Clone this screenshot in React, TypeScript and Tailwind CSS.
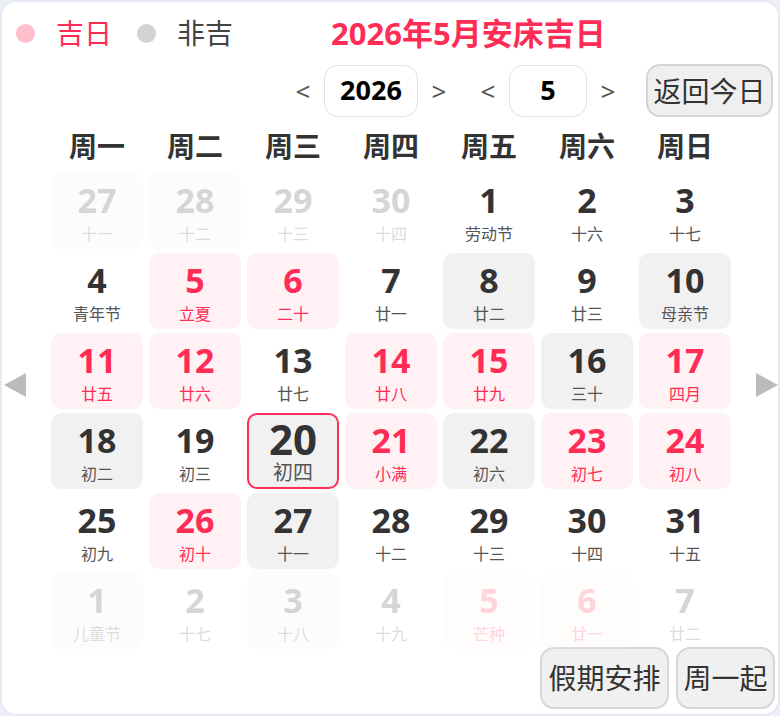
import React from "react";

type Cell = { d: number; l: string; t: "n" | "p" | "g" | "today"; o?: boolean };

const cells: Cell[] = [
  { d: 27, l: "十一", t: "g", o: true },
  { d: 28, l: "十二", t: "g", o: true },
  { d: 29, l: "十三", t: "n", o: true },
  { d: 30, l: "十四", t: "n", o: true },
  { d: 1, l: "劳动节", t: "n" },
  { d: 2, l: "十六", t: "n" },
  { d: 3, l: "十七", t: "n" },
  { d: 4, l: "青年节", t: "n" },
  { d: 5, l: "立夏", t: "p" },
  { d: 6, l: "二十", t: "p" },
  { d: 7, l: "廿一", t: "n" },
  { d: 8, l: "廿二", t: "g" },
  { d: 9, l: "廿三", t: "n" },
  { d: 10, l: "母亲节", t: "g" },
  { d: 11, l: "廿五", t: "p" },
  { d: 12, l: "廿六", t: "p" },
  { d: 13, l: "廿七", t: "n" },
  { d: 14, l: "廿八", t: "p" },
  { d: 15, l: "廿九", t: "p" },
  { d: 16, l: "三十", t: "g" },
  { d: 17, l: "四月", t: "p" },
  { d: 18, l: "初二", t: "g" },
  { d: 19, l: "初三", t: "n" },
  { d: 20, l: "初四", t: "today" },
  { d: 21, l: "小满", t: "p" },
  { d: 22, l: "初六", t: "g" },
  { d: 23, l: "初七", t: "p" },
  { d: 24, l: "初八", t: "p" },
  { d: 25, l: "初九", t: "n" },
  { d: 26, l: "初十", t: "p" },
  { d: 27, l: "十一", t: "g" },
  { d: 28, l: "十二", t: "n" },
  { d: 29, l: "十三", t: "n" },
  { d: 30, l: "十四", t: "n" },
  { d: 31, l: "十五", t: "n" },
  { d: 1, l: "儿童节", t: "g", o: true },
  { d: 2, l: "十七", t: "n", o: true },
  { d: 3, l: "十八", t: "g", o: true },
  { d: 4, l: "十九", t: "n", o: true },
  { d: 5, l: "芒种", t: "p", o: true },
  { d: 6, l: "廿一", t: "p", o: true },
  { d: 7, l: "廿二", t: "n", o: true },
];

const weekdays = ["周一", "周二", "周三", "周四", "周五", "周六", "周日"];

function DayCell({ c }: { c: Cell }) {
  if (c.t === "today") {
    return (
      <div className="h-[76px] rounded-[10px] border-2 border-[#ff2d55] bg-[#f1f1f1] flex flex-col items-center pt-[5px]">
        <div className="text-[42px] leading-[38px] font-bold text-[#333]">{c.d}</div>
        <div className="mt-[5px] text-[20px] leading-[20px] text-[#555]">{c.l}</div>
      </div>
    );
  }
  const bg = c.t === "p" ? "bg-[#fff1f4]" : c.t === "g" ? "bg-[#f1f1f1]" : "";
  const numColor = c.t === "p" ? "text-[#ff2d55]" : "text-[#333]";
  const lunColor = c.t === "p" ? "text-[#ff2d55]" : "text-[#555]";
  return (
    <div className={`h-[76px] rounded-[10px] flex flex-col items-center pt-[10px] ${bg} ${c.o ? "opacity-20" : ""}`}>
      <div className={`text-[34px] leading-[34px] font-bold ${numColor}`}>{c.d}</div>
      <div className={`mt-[9px] text-[16px] leading-[16px] ${lunColor}`}>{c.l}</div>
    </div>
  );
}

export default function App() {
  return (
    <div className="w-[780px] h-[716px] bg-[#eef0f7] font-['Noto_Sans','Noto_Sans_CJK_SC',sans-serif]">
      <div className="relative w-[780px] h-[716px] border-2 border-[#e6e9f5] rounded-[16px] bg-white overflow-hidden">
        {/* legend + title */}
        <div className="h-[62px] flex items-center pl-[14px]">
          <span className="w-[19px] h-[19px] rounded-full bg-[#ffc0cb]" />
          <span className="ml-[21px] text-[28px] leading-none text-[#ff2d55]">吉日</span>
          <span className="ml-[25px] w-[19px] h-[19px] rounded-full bg-[#d3d3d3]" />
          <span className="ml-[21px] text-[28px] leading-none text-[#444]">非吉</span>
          <span className="ml-[98px] text-[31px] leading-none font-bold text-[#ff2d55]">2026年5月安床吉日</span>
        </div>
        {/* nav */}
        <div className="h-[53px] flex items-center pl-[289px]">
          <span className="w-[24px] text-center text-[26px] leading-none text-[#555]">&lt;</span>
          <div className="ml-[9px] w-[94px] h-[52px] rounded-[14px] border-[1.5px] border-[#e0e0e0] flex items-center justify-center text-[27px] font-bold text-black">2026</div>
          <span className="ml-[9px] w-[24px] text-center text-[26px] leading-none text-[#555]">&gt;</span>
          <span className="ml-[25px] w-[24px] text-center text-[26px] leading-none text-[#555]">&lt;</span>
          <div className="ml-[9px] w-[78px] h-[52px] rounded-[14px] border-[1.5px] border-[#e0e0e0] flex items-center justify-center text-[27px] font-bold text-black">5</div>
          <span className="ml-[9px] w-[24px] text-center text-[26px] leading-none text-[#555]">&gt;</span>
          <div className="ml-[26px] w-[127px] h-[53px] rounded-[14px] border-2 border-[#d4d4d4] bg-[#efefef] flex items-center justify-center text-[28px] text-[#333]">返回今日</div>
        </div>
        {/* weekdays */}
        <div className="ml-[49px] w-[680px] h-[56px] grid grid-cols-7 gap-x-[6px] items-center pt-[2px]">
          {weekdays.map((w) => (
            <div key={w} className="text-center text-[28px] leading-none font-bold text-[#333]">{w}</div>
          ))}
        </div>
        {/* grid */}
        <div className="ml-[49px] w-[680px] grid grid-cols-7 gap-x-[6px] gap-y-[4px]">
          {cells.map((c, i) => (
            <DayCell key={i} c={c} />
          ))}
        </div>
        {/* bottom buttons */}
        <div className="-mt-[2px] flex justify-end gap-[7px] pr-[3px]">
          <div className="w-[129px] h-[62px] rounded-[14px] border-2 border-[#d6d6d6] bg-[#f0f0f0] flex items-center justify-center text-[28px] text-[#333]">假期安排</div>
          <div className="w-[99px] h-[62px] rounded-[14px] border-2 border-[#d6d6d6] bg-[#f0f0f0] flex items-center justify-center text-[28px] text-[#333]">周一起</div>
        </div>
        {/* side arrows */}
        <svg className="absolute left-[2px] top-[371px]" width="22" height="24" viewBox="0 0 22 24">
          <polygon points="22,0 22,24 0,12" fill="#bbbbbb" />
        </svg>
        <svg className="absolute right-[0px] top-[371px]" width="22" height="24" viewBox="0 0 22 24">
          <polygon points="0,0 0,24 22,12" fill="#bbbbbb" />
        </svg>
      </div>
    </div>
  );
}
